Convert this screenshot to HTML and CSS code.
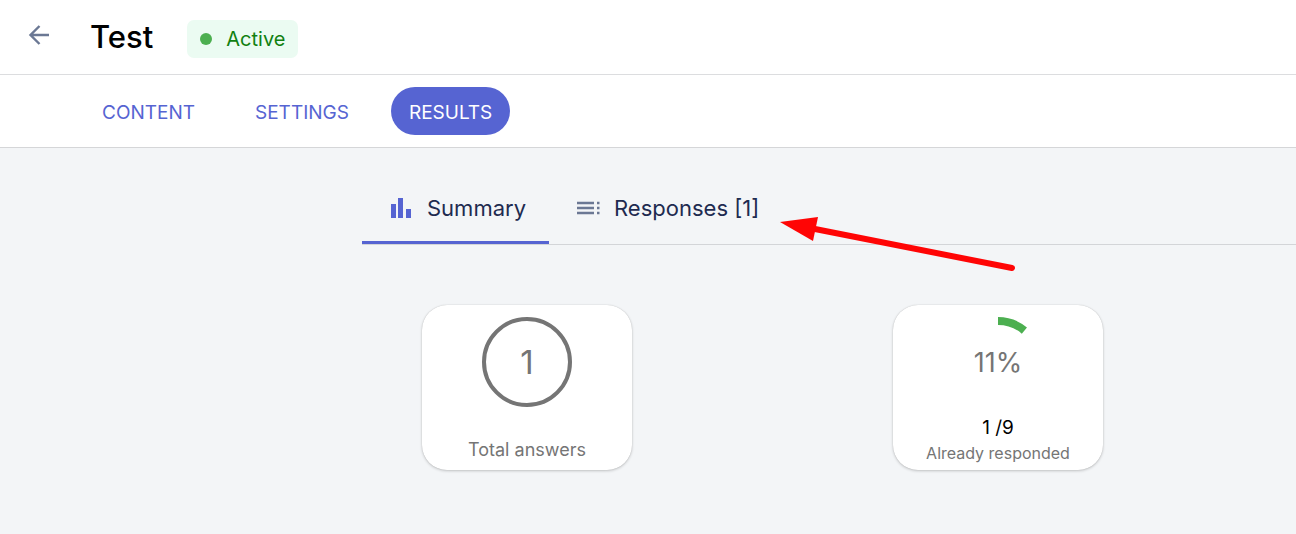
FILE: index.html
```html
<!DOCTYPE html>
<html lang="en">
<head>
    <meta charset="UTF-8">
    <meta name="viewport" content="width=device-width, initial-scale=1.0">
    <title>Test - Results</title>
    <link rel="stylesheet" href="styles.css">
</head>
<body>
    <header class="header">
        <button type="button" class="back-button" aria-label="Back">
            <svg width="22" height="22" viewBox="0 0 22 22" fill="none" stroke="#6b7894" stroke-width="2.400">
                <path d="M21 11H3M11.500 2L2.500 11l9 9"/>
            </svg>
        </button>
        <h1 class="title">Test</h1>
        <span class="status"><span class="status-dot"></span>Active</span>
    </header>
    <nav class="nav">
        <a href="#content" class="nav-link">CONTENT</a>
        <a href="#settings" class="nav-link">SETTINGS</a>
        <a href="#results" class="nav-link active">RESULTS</a>
    </nav>
    <main class="main">
        <div class="tabs">
            <button type="button" class="tab selected">
                <svg width="24" height="24" viewBox="0 0 24 24" fill="#5664d2">
                    <path d="M2 8h5v14H2zM9 2h5v20H9zM17 13h5v9h-5z"/>
                </svg>
                Summary
            </button>
            <button type="button" class="tab">
                <svg width="24" height="24" viewBox="0 0 24 24" stroke="#6b7894" stroke-width="2.400">
                    <path d="M1 7h17M1 12h17M1 17h17M21 7h2.500M21 12h2.500M21 17h2.500"/>
                </svg>
                Responses [1]
            </button>
            <svg class="arrow" width="240" height="60" viewBox="0 0 240 60">
                <path d="M35 13L232 52" stroke="#ff0505" stroke-width="6" stroke-linecap="round"/>
                <path d="M0 6L38 1L33 25z" fill="#ff0505"/>
            </svg>
        </div>
        <div class="cards">
            <section class="card">
                <div class="total-circle">1</div>
                <div class="total-label">Total answers</div>
            </section>
            <section class="card">
                <div class="progress">
                    <svg class="progress-ring" width="90" height="90" viewBox="0 0 90 90" fill="none">
                        <path d="M45 4A41 41 0 0 1 71.400 13.600" stroke="#4caf50" stroke-width="8"/>
                    </svg>
                    11%
                </div>
                <div class="responded-count">1 /9</div>
                <div class="responded-label">Already responded</div>
            </section>
        </div>
    </main>
</body>
</html>
```
FILE: styles.css
```css
* {
    box-sizing: border-box;
}
body {
    margin: 0;
    min-height: 100vh;
    font-family: Inter, "Liberation Sans", sans-serif;
    background-color: #f3f5f7;
    color: #000;
}
button {
    font-family: inherit;
    border: none;
    background: none;
    padding: 0;
    cursor: pointer;
}
.header {
    display: flex;
    align-items: center;
    height: 75px;
    padding: 0 28px;
    background-color: #fff;
    border-bottom: 1px solid #dcdddf;
}
.back-button {
    display: flex;
    width: 22px;
    margin-right: 40px;
    padding-bottom: 4px;
}
.title {
    margin: 0 34px 0 0;
    font-size: 31px;
    font-weight: 500;
    line-height: 40px;
}
.status {
    display: flex;
    align-items: center;
    gap: 14px;
    height: 38px;
    margin-top: 4px;
    padding: 0 13px;
    border-radius: 7px;
    background-color: #ebfbf2;
    color: #118011;
    font-size: 20px;
}
.status-dot {
    width: 12px;
    height: 12px;
    border-radius: 50%;
    background-color: #4caf50;
}
.nav {
    display: flex;
    align-items: center;
    gap: 24px;
    height: 73px;
    padding: 0 84px;
    background-color: #fff;
    border-bottom: 1px solid #d5d6d8;
}
.nav-link {
    padding: 14px 18px 10px;
    border-radius: 24px;
    color: #5664d2;
    font-size: 19px;
    line-height: 24px;
    text-decoration: none;
}
.nav-link.active {
    background-color: #5664d2;
    color: #fff;
}
.main {
    padding: 24px 0 60px 362px;
}
.tabs {
    position: relative;
    display: flex;
    border-bottom: 1px solid #d3d5d8;
}
.tab {
    display: flex;
    align-items: center;
    gap: 14px;
    height: 72px;
    padding: 2px 23px 0 27px;
    border-bottom: 3px solid transparent;
    color: #1e2b50;
    font-size: 22px;
}
.tab.selected {
    border-bottom-color: #5664d2;
}
/* lies over the tab row and its bottom line */
.arrow {
    position: absolute;
    left: 418px;
    top: 44px;
}
.cards {
    display: grid;
    grid-template-columns: 1fr 1fr;
    gap: 68px;
    padding: 60px 0 0 60px;
}
.card {
    display: flex;
    flex-direction: column;
    align-items: center;
    width: 210px;
    height: 165px;
    padding-top: 12px;
    border-radius: 25px;
    background-color: #fff;
    box-shadow: 0 1px 3px rgba(0, 0, 0, 0.2), 0 0 1px rgba(0, 0, 0, 0.2);
    color: #757575;
}
.total-circle,
.progress {
    display: flex;
    align-items: center;
    justify-content: center;
    width: 90px;
    height: 90px;
}
.total-circle {
    border: 4px solid #757575;
    border-radius: 50%;
    font-size: 33px;
}
.total-label {
    margin-top: 31px;
    font-size: 18px;
    line-height: 24px;
}
.progress {
    position: relative;
    font-size: 27px;
}
.progress-ring {
    position: absolute;
    left: 0;
    top: 0;
}
.responded-count {
    margin-top: 9px;
    color: #000;
    font-size: 19px;
    line-height: 24px;
}
.responded-label {
    margin-top: 3px;
    font-size: 16px;
    line-height: 20px;
}
```
